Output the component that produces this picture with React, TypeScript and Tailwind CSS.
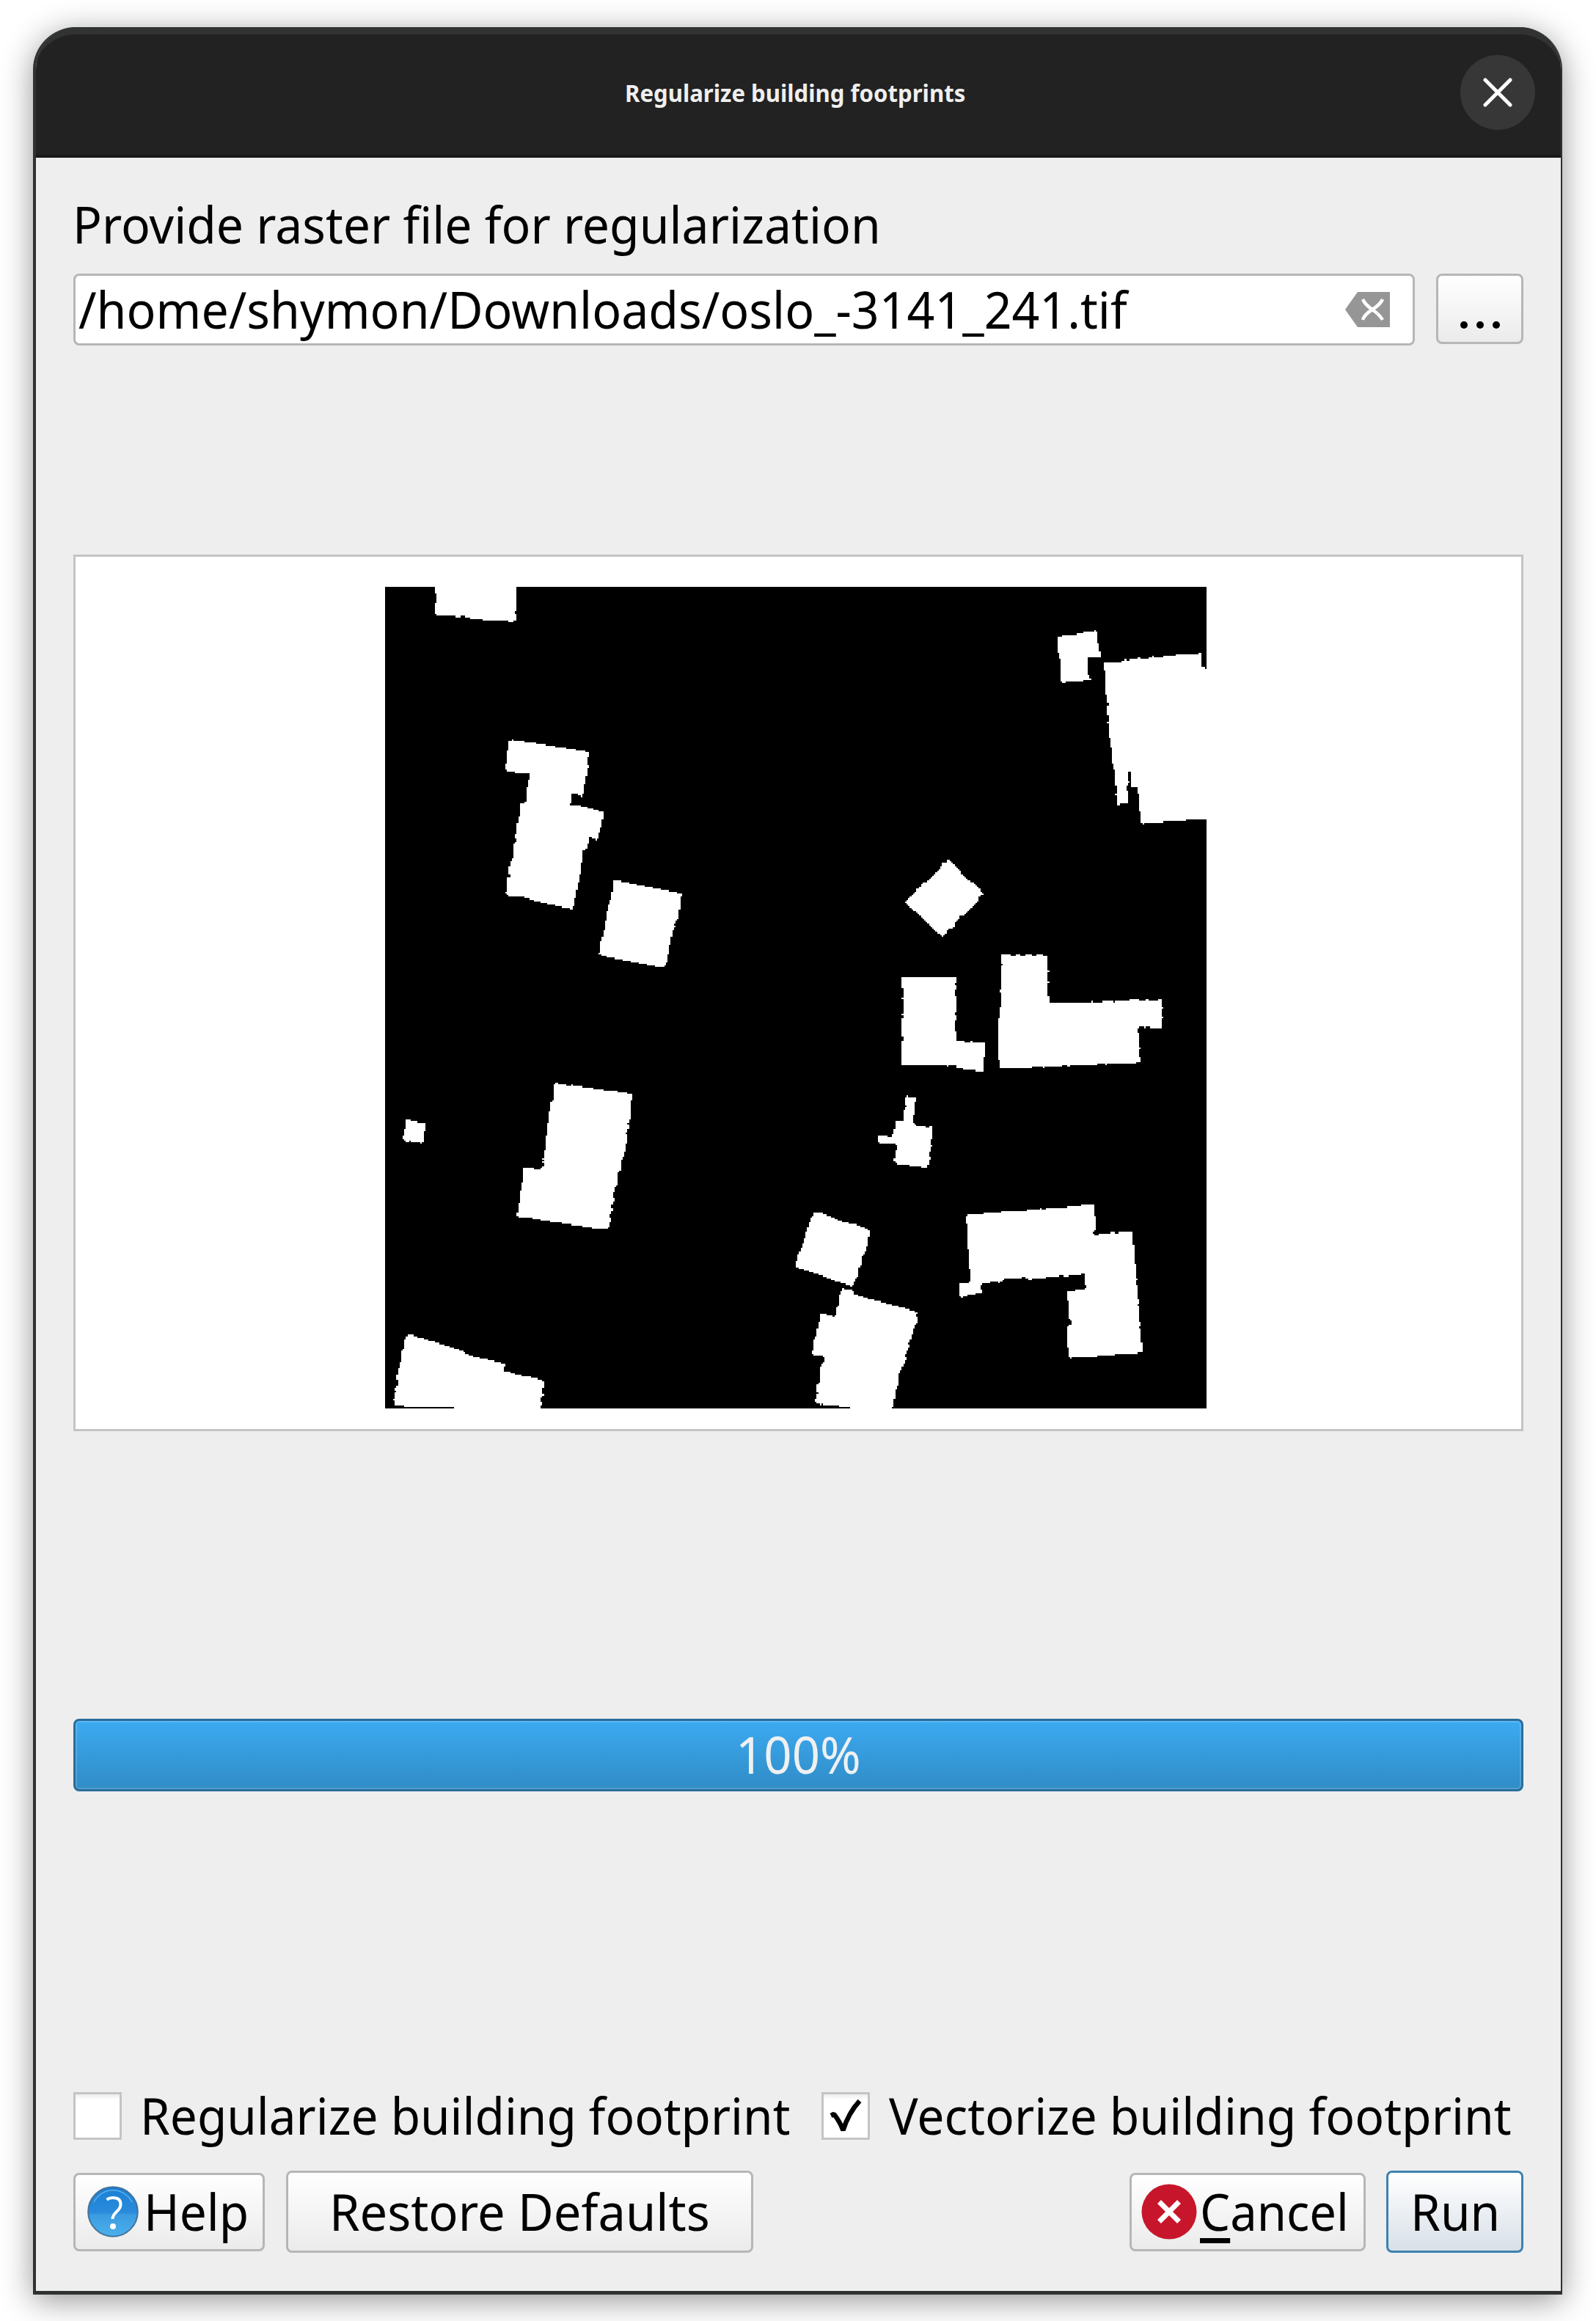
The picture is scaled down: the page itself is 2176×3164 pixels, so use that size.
import { useLayoutEffect, useRef, useState } from "react";

type Origin = "nw" | "ne" | "sw" | "se";
type Footprint = { from: Origin; points: number[] };

// Tracing frames: offset of each quadrant in mask pixels and its scale.
const FRAMES: Record<Origin, [number, number, number, number]> = {
  nw: [-15, -20, 1 / 2.8, 1 / 2.6133],
  ne: [535, -20, 1 / 2.6133, 1 / 2.6133],
  sw: [-15, 580, 1 / 2.8, 1 / 2.6133],
  se: [535, 580, 1 / 2.6133, 1 / 2.6133],
};

const FOOTPRINTS: Footprint[] = [
  { from: "nw", points: [233, 40, 233, 75, 239, 75, 239, 109, 233, 109, 233, 150, 240, 155, 313, 155, 313, 161, 330, 161, 330, 155, 348, 155, 348, 161, 368, 161, 368, 167, 416, 167, 416, 172, 514, 173, 514, 178, 532, 178, 532, 172, 546, 172, 546, 149, 540, 149, 540, 138, 546, 138, 546, 40] },
  { from: "nw", points: [515, 601, 526, 601, 526, 595, 534, 600, 558, 601, 820, 640, 820, 658, 814, 662, 814, 686, 820, 690, 814, 707, 796, 801, 771, 790, 753, 789, 753, 813, 747, 829, 778, 829, 876, 854, 870, 897, 851, 955, 826, 945, 820, 945, 814, 985, 797, 990, 790, 1060, 759, 1202, 735, 1196, 643, 1178, 600, 1166, 564, 1155, 515, 1154, 502, 1140, 509, 1132, 509, 1090, 521, 1082, 515, 1074, 515, 1052, 533, 1005, 533, 966, 545, 957, 539, 948, 546, 900, 558, 850, 558, 827, 582, 817, 582, 778, 594, 716, 558, 715, 515, 709, 502, 704, 502, 683, 509, 680, 509, 635, 515, 634] },
  { from: "nw", points: [913, 1099, 930, 1099, 998, 1112, 1176, 1145, 1170, 1165, 1163, 1230, 1144, 1255, 1152, 1261, 1140, 1275, 1115, 1400, 1108, 1407, 1080, 1406, 1035, 1398, 950, 1382, 870, 1367, 858, 1358, 864, 1350, 864, 1320, 876, 1290, 889, 1213, 907, 1150] },
  { from: "ne", points: [992, 236, 1015, 225, 1060, 222, 1100, 212, 1128, 212, 1132, 206, 1140, 212, 1141, 240, 1152, 302, 1106, 303, 1106, 360, 1118, 382, 1090, 384, 1088, 389, 1032, 389, 1016, 395, 1009, 384, 1009, 322, 998, 280, 998, 238] },
  { from: "ne", points: [1164, 321, 1220, 320, 1240, 311, 1245, 315, 1290, 305, 1294, 309, 1322, 309, 1337, 298, 1342, 303, 1375, 303, 1377, 298, 1420, 297, 1422, 292, 1500, 292, 1505, 287, 1513, 292, 1513, 338, 1524, 338, 1530, 348, 1545, 348, 1545, 881, 1457, 881, 1457, 887, 1376, 887, 1376, 893, 1308, 893, 1303, 899, 1296, 893, 1296, 853, 1290, 853, 1290, 790, 1284, 790, 1284, 767, 1261, 767, 1261, 710, 1250, 710, 1250, 742, 1255, 747, 1250, 751, 1250, 762, 1243, 762, 1243, 777, 1250, 777, 1250, 824, 1221, 824, 1221, 830, 1209, 830, 1209, 797, 1204, 792, 1209, 787, 1209, 762, 1204, 760, 1203, 715, 1192, 670, 1186, 590, 1181, 587, 1181, 540, 1175, 535, 1181, 530, 1175, 497, 1175, 475, 1181, 469, 1175, 462, 1170, 425, 1169, 350, 1164, 348] },
  { from: "ne", points: [606, 1023, 620, 1032, 680, 1098, 698, 1104, 735, 1147, 718, 1157, 718, 1170, 675, 1210, 672, 1218, 652, 1226, 630, 1250, 630, 1264, 608, 1274, 600, 1286, 587, 1299, 455, 1176, 490, 1142, 492, 1132, 512, 1120, 515, 1108, 532, 1102, 580, 1055, 584, 1040, 600, 1034] },
  { from: "se", points: [444, -126, 632, -126, 638, -120, 638, -107, 632, -103, 638, -95, 638, -82, 632, -80, 632, -60, 638, -55, 638, -10, 632, 5, 638, 22, 632, 28, 632, 65, 638, 70, 638, 104, 645, 103, 664, 103, 666, 107, 688, 107, 692, 102, 700, 107, 740, 108, 740, 157, 735, 160, 735, 211, 707, 211, 707, 205, 672, 205, 640, 198, 638, 189, 610, 188, 603, 193, 597, 188, 444, 188, 444, 103, 449, 98, 449, 88, 444, 84, 444, 22, 449, 18, 444, 5, 449, -2, 449, -42, 444, -52, 449, -60, 449, -85, 444, -90] },
  { from: "se", points: [797, -207, 830, -207, 832, -201, 848, -201, 850, -207, 868, -207, 868, -201, 883, -201, 886, -207, 906, -207, 908, -201, 922, -201, 925, -207, 945, -207, 947, -201, 963, -201, 963, -151, 969, -147, 963, -142, 963, -113, 969, -108, 963, -103, 963, -58, 969, -52, 965, -40, 975, -31, 982, -36, 1117, -36, 1121, -41, 1125, -36, 1157, -36, 1159, -41, 1197, -41, 1201, -36, 1205, -41, 1254, -42, 1256, -47, 1287, -47, 1289, -42, 1312, -42, 1314, -47, 1323, -47, 1325, -42, 1355, -42, 1358, -47, 1370, -47, 1370, -22, 1375, -18, 1370, -12, 1370, 15, 1375, 19, 1370, 24, 1370, 56, 1330, 56, 1328, 51, 1314, 51, 1310, 56, 1300, 51, 1290, 51, 1284, 57, 1284, 72, 1290, 74, 1290, 123, 1295, 128, 1289, 133, 1289, 157, 1295, 160, 1295, 177, 1280, 177, 1278, 182, 1176, 182, 1170, 188, 1164, 182, 1142, 182, 1140, 188, 1043, 188, 1038, 194, 1030, 188, 1016, 188, 1014, 194, 952, 194, 947, 199, 940, 194, 908, 194, 906, 199, 792, 199, 792, 170, 787, 168, 787, 22, 792, 20, 792, -18, 798, -20, 798, -65, 792, -68, 792, -80, 798, -82, 798, -164, 803, -170, 797, -175] },
  { from: "se", points: [455, 302, 461, 301, 465, 296, 471, 302, 495, 302, 495, 318, 489, 320, 489, 363, 483, 366, 483, 392, 497, 405, 529, 405, 532, 410, 552, 405, 552, 447, 546, 450, 546, 470, 551, 476, 546, 480, 546, 492, 541, 496, 541, 512, 546, 518, 541, 525, 535, 553, 513, 552, 512, 547, 472, 547, 470, 542, 428, 542, 415, 530, 415, 520, 421, 515, 421, 492, 427, 488, 427, 476, 415, 468, 368, 468, 357, 460, 357, 439, 392, 439, 394, 444, 408, 444, 410, 435, 415, 430, 415, 416, 421, 410, 421, 388, 449, 388, 449, 348, 455, 344, 455, 338, 460, 333, 455, 328] },
  { from: "se", points: [132, 713, 152, 713, 230, 745, 282, 757, 330, 777, 330, 790, 324, 800, 324, 825, 312, 857, 301, 870, 299, 900, 289, 910, 288, 935, 266, 976, 200, 955, 142, 932, 82, 912, 66, 906, 66, 885, 72, 880, 74, 862, 84, 845, 112, 752, 117, 738] },
  { from: "se", points: [673, 724, 680, 719, 735, 719, 735, 714, 798, 713, 798, 708, 890, 707, 890, 702, 930, 702, 935, 696, 942, 702, 956, 702, 958, 696, 1032, 696, 1033, 690, 1085, 690, 1086, 685, 1125, 685, 1129, 692, 1129, 725, 1135, 730, 1135, 770, 1123, 786, 1132, 794, 1147, 793, 1147, 788, 1186, 788, 1190, 782, 1202, 782, 1208, 788, 1216, 782, 1267, 782, 1267, 828, 1272, 830, 1273, 895, 1278, 900, 1278, 945, 1284, 950, 1278, 958, 1278, 968, 1284, 970, 1284, 1020, 1289, 1025, 1289, 1037, 1283, 1045, 1289, 1051, 1289, 1100, 1295, 1104, 1295, 1118, 1289, 1125, 1295, 1130, 1295, 1177, 1301, 1180, 1301, 1210, 1285, 1211, 1282, 1217, 1205, 1217, 1203, 1222, 1142, 1222, 1140, 1228, 1055, 1228, 1048, 1233, 1038, 1225, 1038, 1195, 1032, 1192, 1032, 1118, 1048, 1112, 1048, 1096, 1038, 1090, 1038, 1030, 1032, 1027, 1032, 994, 1060, 993, 1062, 988, 1095, 987, 1101, 978, 1095, 968, 1095, 936, 1087, 931, 1078, 936, 1038, 936, 1034, 942, 1022, 942, 1018, 937, 1006, 937, 1003, 942, 958, 942, 956, 947, 907, 947, 901, 953, 883, 947, 877, 942, 870, 948, 810, 948, 800, 959, 785, 964, 778, 959, 758, 959, 756, 965, 730, 965, 723, 975, 723, 985, 729, 990, 729, 999, 707, 999, 705, 1004, 680, 1006, 655, 1016, 649, 1010, 649, 968, 655, 965, 684, 964, 690, 957, 690, 918, 684, 915, 684, 847, 678, 843, 678, 806, 673, 799, 678, 792, 678, 756, 673, 754] },
  { from: "se", points: [232, 983, 238, 988, 266, 988, 272, 1003, 330, 1022, 440, 1050, 462, 1056, 498, 1070, 494, 1080, 500, 1088, 500, 1103, 484, 1125, 478, 1160, 467, 1180, 472, 1190, 462, 1208, 455, 1222, 460, 1235, 433, 1285, 432, 1330, 421, 1342, 420, 1375, 415, 1380, 412, 1408, 408, 1408, 408, 1425, 261, 1425, 261, 1406, 222, 1405, 220, 1400, 168, 1400, 162, 1394, 155, 1399, 134, 1387, 134, 1380, 141, 1376, 141, 1364, 146, 1358, 141, 1350, 141, 1326, 152, 1320, 152, 1262, 168, 1243, 168, 1230, 161, 1222, 130, 1222, 123, 1214, 123, 1206, 129, 1202, 129, 1168, 140, 1150, 141, 1126, 146, 1124, 152, 1073, 172, 1073, 176, 1079, 195, 1079, 200, 1084, 209, 1080, 209, 1050, 221, 1044, 221, 1010] },
  { from: "sw", points: [686, 256, 692, 255, 697, 250, 705, 256, 734, 256, 737, 262, 752, 262, 756, 256, 762, 262, 795, 262, 797, 268, 838, 268, 840, 273, 875, 273, 877, 279, 930, 279, 932, 285, 968, 285, 970, 290, 987, 290, 987, 312, 981, 315, 981, 376, 968, 394, 974, 408, 968, 422, 962, 432, 968, 440, 961, 490, 944, 530, 943, 560, 932, 575, 931, 610, 919, 624, 912, 652, 918, 670, 906, 690, 912, 703, 900, 725, 906, 740, 894, 770, 852, 771, 640, 740, 588, 731, 552, 731, 545, 720, 551, 710, 551, 682, 557, 678, 558, 634, 564, 630, 564, 606, 570, 603, 570, 553, 611, 553, 613, 559, 637, 559, 649, 545, 643, 535, 649, 528, 643, 520, 649, 515, 656, 452, 662, 405, 674, 325, 686, 305] },
  { from: "sw", points: [122, 382, 140, 382, 142, 388, 165, 388, 167, 393, 196, 394, 196, 420, 190, 424, 190, 462, 182, 467, 172, 462, 142, 462, 138, 456, 128, 461, 122, 461, 110, 448, 110, 440, 116, 436, 116, 417, 122, 415] },
  { from: "sw", points: [128, 1148, 152, 1148, 160, 1156, 190, 1162, 340, 1208, 365, 1222, 500, 1252, 496, 1280, 515, 1281, 540, 1290, 590, 1298, 640, 1310, 650, 1314, 649, 1335, 643, 1337, 643, 1357, 649, 1363, 643, 1369, 637, 1374, 637, 1384, 643, 1392, 637, 1402, 637, 1425, 306, 1425, 306, 1406, 117, 1405, 115, 1399, 79, 1399, 79, 1385, 73, 1380, 79, 1374, 79, 1360, 85, 1353, 79, 1345, 79, 1338, 91, 1325, 91, 1312, 85, 1305, 85, 1293, 91, 1290, 97, 1250, 104, 1245, 104, 1205, 116, 1198, 117, 1166] },
];

const MASK = 512;
const MASK_PX = 1120;

// Scan-converts a polygon onto the 512 px mask grid, one run per row.
function rasterize({ from, points }: Footprint): string {
  const [ox, oy, sx, sy] = FRAMES[from];
  const k = MASK / MASK_PX;
  const pts: [number, number][] = [];
  for (let i = 0; i < points.length; i += 2) {
    pts.push([(ox + points[i] * sx) * k, (oy + points[i + 1] * sy) * k]);
  }
  let d = "";
  for (let row = 0; row < MASK; row++) {
    const y = row + 0.5;
    const hits: number[] = [];
    pts.forEach(([x1, y1], i) => {
      const [x2, y2] = pts[(i + 1) % pts.length];
      if (y1 <= y !== y2 <= y) hits.push(x1 + ((y - y1) / (y2 - y1)) * (x2 - x1));
    });
    hits.sort((a, b) => a - b);
    for (let i = 0; i + 1 < hits.length; i += 2) {
      const a = Math.round(hits[i]);
      const b = Math.round(hits[i + 1]);
      if (b > a) d += `M${a} ${row}H${b}V${row + 1}H${a}Z`;
    }
  }
  return d;
}

const MASK_PATH = FOOTPRINTS.map(rasterize).join("");

// Single line of text condensed or widened to an exact width.
function FitText({ text, width, className = "", mnemonic = false }: { text: string; width: number; className?: string; mnemonic?: boolean }) {
  const ref = useRef<HTMLSpanElement>(null);
  const [scale, setScale] = useState(1);
  useLayoutEffect(() => {
    if (ref.current) setScale(width / ref.current.offsetWidth);
  }, [width, text]);
  return (
    <span className={"block shrink-0 pb-[3px] whitespace-nowrap " + className} style={{ width }}>
      <span ref={ref} className="inline-block origin-left" style={{ transform: `scaleX(${scale})` }}>
        {mnemonic ? (
          <>
            <span className="underline decoration-[7px] underline-offset-[10px] [text-decoration-skip-ink:none]">{text[0]}</span>
            {text.slice(1)}
          </>
        ) : (
          text
        )}
      </span>
    </span>
  );
}

const BUTTON = "flex shrink-0 items-center rounded-[8px] border-[3px] border-[#b6b6b6] bg-linear-to-b from-white to-[#ebebeb]";

function CheckBox({ checked = false }: { checked?: boolean }) {
  return (
    <div className="flex h-[65px] w-[66px] shrink-0 items-center justify-center border-[3px] border-[#c4c4c4] bg-linear-to-b from-[#ececec] to-white to-12%">
      {checked && (
        <svg viewBox="0 0 59 60" className="h-[60px] w-[59px]" fill="none" stroke="#000" strokeWidth="6.5">
          <path d="M9 29 L13 27 Q21 37 25.5 49 Q33 25 48 9" strokeLinejoin="bevel" />
        </svg>
      )}
    </div>
  );
}

export default function App() {
  return (
    <div className="h-[3164px] w-[2176px] overflow-hidden bg-white pt-[37px] pl-[45px] font-['Noto_Sans',sans-serif] text-[69px] leading-[96px] text-black">
      <div className="flex h-[3091px] w-[2085px] flex-col overflow-hidden rounded-t-[58px] border-r-2 border-b-[5px] border-l-4 border-[#303232] bg-[#eeeeee] shadow-[0_8px_44px_rgba(0,0,0,0.42)]">
        <header className="-mr-[2px] -ml-1 flex h-[178px] shrink-0 items-center rounded-t-[58px] border-b-4 border-[#191919] bg-[#222222] pl-[807px] shadow-[inset_0_10px_0_#313232]">
          <FitText text="Regularize building footprints" width={464} className="mt-[9px] text-[32px] font-bold text-[#efefef]" />
          <button className="mb-[-4px] ml-[675px] flex size-[102px] items-center justify-center rounded-full bg-[#373737]">
            <svg viewBox="0 0 40 40" className="size-10" stroke="#fff" strokeWidth="5" strokeLinecap="round">
              <path d="M3 3 37 37M37 3 3 37" />
            </svg>
          </button>
        </header>

        <main className="flex flex-1 flex-col pl-[51px]">
          <FitText text="Provide raster file for regularization" width={1102} className="mt-[42px] -ml-px" />

          <div className="mt-[17px] flex gap-[29px]">
            <div className="flex h-[98px] w-[1829px] items-center rounded-[8px] border-[3px] border-[#b6b6b6] bg-white">
              <FitText text="/home/shymon/Downloads/oslo_-3141_241.tif" width={1430} className="ml-1" />
              <svg viewBox="0 0 62 50" className="ml-[296px] h-[50px] w-[62px]">
                <path d="M1 25 18 1H62V49H18Z" fill="#969696" />
                <path d="M25 11Q28 18 38 25T52 39M52 11Q49 18 38 25T25 39" fill="none" stroke="#fff" strokeWidth="4.5" />
              </svg>
            </div>
            <button className="flex h-[96px] w-[119px] items-end justify-center gap-[12px] rounded-[8px] border-[3px] border-[#b6b6b6] bg-linear-to-b from-white to-[#ebebeb] pb-[18px]">
              <span className="size-[10px] rounded-full bg-black" />
              <span className="size-[10px] rounded-full bg-black" />
              <span className="size-[10px] rounded-full bg-black" />
            </button>
          </div>

          <div className="mt-[285px] h-[1195px] w-[1977px] border-[3px] border-[#c4c4c4] bg-white pt-[41px] pl-[422px]">
            <svg viewBox="0 0 512 512" className="size-[1120px] bg-black">
              <path d={MASK_PATH} fill="#fff" shapeRendering="crispEdges" />
            </svg>
          </div>

          <div className="mt-[392px] flex h-[99px] w-[1977px] items-center justify-center rounded-[8px] border-[3px] border-[#2a6d9b] bg-linear-to-b from-[#3caaf1] to-[#308cc6] text-[#eff0f1] shadow-[inset_0_0_0_2px_rgba(255,255,255,0.16)]">
            <FitText text="100%" width={171} />
          </div>

          <div className="mt-[410px] flex h-[65px] items-center">
            <CheckBox />
            <FitText text="Regularize building footprint" width={886} className="ml-[25px]" />
            <div className="ml-[43px]">
              <CheckBox checked />
            </div>
            <FitText text="Vectorize building footprint" width={849} className="ml-[26px]" />
          </div>

          <div className="mt-[42px] flex h-[112px] items-center">
            <button className={BUTTON + " h-[107px] w-[261px] pl-[15px]"}>
              <svg viewBox="0 0 72 72" className="size-[72px] shrink-0">
                <defs>
                  <linearGradient id="help" x1="0" y1="0" x2="0" y2="1">
                    <stop offset="0" stopColor="#1b7fd4" />
                    <stop offset="0.52" stopColor="#2a8bdc" />
                    <stop offset="0.56" stopColor="#3b9be0" />
                    <stop offset="1" stopColor="#4bb0ec" />
                  </linearGradient>
                </defs>
                <circle cx="36" cy="36" r="33.800" fill="url(#help)" stroke="#44729a" strokeWidth="2" />
                <path d="M10 23A29 29 0 0 1 62 23" fill="none" stroke="#5fb0ea" strokeWidth="1.500" />
                <path d="M27.500 19.500Q31 17 36 17Q46.500 17 46.500 26Q46.500 31 41 36Q35.500 41 35.500 46" fill="none" stroke="#fff" strokeWidth="4" />
                <circle cx="36" cy="56" r="4" fill="#fff" />
              </svg>
              <FitText text="Help" width={143} className="ml-[6px]" />
            </button>
            <button className={BUTTON + " ml-[29px] h-[112px] w-[637px] justify-center"}>
              <FitText text="Restore Defaults" width={519} />
            </button>
            <button className={BUTTON + " ml-[513px] h-[107px] w-[322px] pl-[13px]"}>
              <svg viewBox="0 0 76 76" className="size-[76px] shrink-0">
                <circle cx="38" cy="38" r="37.500" fill="#c7162b" />
                <path d="M24.500 24.500 51.500 51.500M51.500 24.500 24.500 51.500" stroke="#fff" strokeWidth="7" />
              </svg>
              <FitText text="Cancel" width={203} className="ml-[4px]" mnemonic />
            </button>
            <button className="ml-[28px] flex h-[112px] w-[187px] items-center justify-center rounded-[8px] border-[3px] border-[#3d82b0] bg-linear-to-b from-white to-[#d8e0e8]">
              <FitText text="Run" width={122} />
            </button>
          </div>
        </main>
      </div>
    </div>
  );
}
